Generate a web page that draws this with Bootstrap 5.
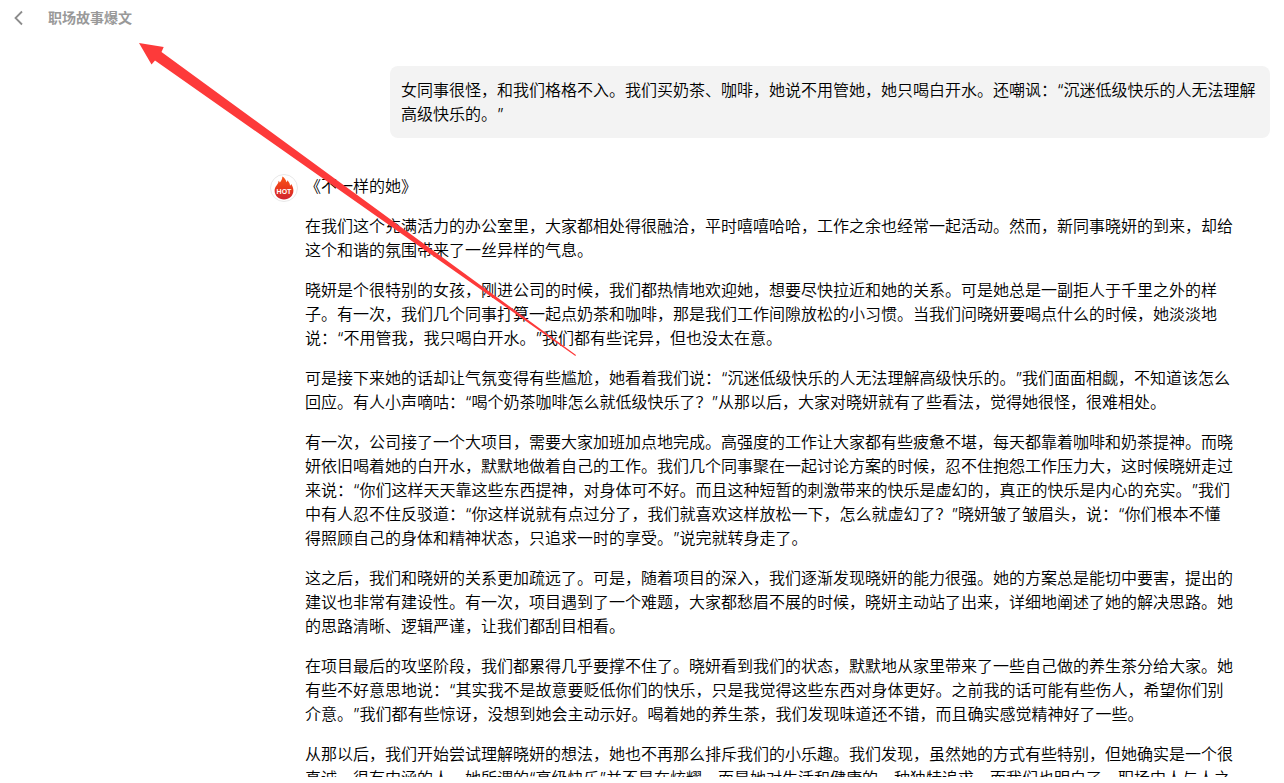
<!DOCTYPE html>
<html lang="zh-CN">
<head>
<meta charset="utf-8">
<meta name="viewport" content="width=device-width, initial-scale=1">
<title>职场故事爆文</title>
<link href="https://cdn.jsdelivr.net/npm/bootstrap@5.3.0/dist/css/bootstrap.min.css" rel="stylesheet">
<style>
  body { font-family: Inter, "Noto Sans CJK SC", sans-serif; font-size: 16px; line-height: 24px; font-weight: 350; color: #000; background: #fff; text-spacing-trim: space-all; }
  .page { height: 100vh; padding-bottom: 6px; }
  .topbar { height: 36px; padding-left: 12px; gap: 22px; }
  .back { width: 14px; height: 24px; color: #8c8c8c; }
  .title { font-size: 14px; line-height: 24px; font-weight: 700; color: #999; }
  .chat { padding: 30px 14px 0 270px; gap: 36px; }
  .bubble { margin-left: 120px; padding: 12px 12px 12px 11px; border-radius: 8px; background: #f3f3f3; }
  .reply { gap: 7px; padding-right: 34px; }
  .story p { margin-bottom: 16px; }
  .hot-label { font: 700 7px "Liberation Sans", sans-serif; fill: #fff; }
  .pointer { left: 0; top: 0; pointer-events: none; }
</style>
</head>
<body>
<div class="page overflow-hidden">
  <div class="h-100 overflow-hidden position-relative">
    <header class="topbar d-flex align-items-center">
      <button type="button" class="back btn p-0 border-0 d-flex align-items-center justify-content-center" aria-label="返回">
        <svg width="14" height="16" viewBox="0 0 14 16" fill="none" stroke="currentColor" stroke-width="1.8"><path d="M10 1.5 3.5 8l6.5 6.5"/></svg>
      </button>
      <h1 class="title m-0">职场故事爆文</h1>
    </header>
    <main class="chat d-flex flex-column">
      <div class="bubble">女同事很怪，和我们格格不入。我们买奶茶、咖啡，她说不用管她，她只喝白开水。还嘲讽：“沉迷低级快乐的人无法理解高级快乐的。”</div>
      <article class="reply d-flex align-items-start">
        <svg class="flex-shrink-0" width="28" height="28" viewBox="0 0 28 28" role="img" aria-label="HOT">
          <defs>
            <linearGradient id="flame" x1="0" y1="0" x2="0" y2="1">
              <stop offset="0" stop-color="#f8551a"/>
              <stop offset=".5" stop-color="#ea3a1c"/>
              <stop offset="1" stop-color="#cf2430"/>
            </linearGradient>
          </defs>
          <circle cx="14" cy="14" r="13.5" fill="#fff" stroke="#e8e8e8"/>
          <path d="M12.300 2.400c.2 2.600-1 4.200-2.500 6-.3-.8-.7-1.200-1.300-1.600.2 2-.8 3-2 4.600C5.200 13 4.600 14.600 4.600 16.600c0 5.200 4.200 9 9.400 9s9.400-3.800 9.400-9c0-2.700-1-4.700-2.200-6.600-.3.8-.6 1.300-1.200 1.700-.1-2.400-1.100-4-2.700-5.500-.1.900-.3 1.500-.8 2.100-.6-2.600-1.900-4.600-4.200-5.900z" fill="url(#flame)"/>
          <text class="hot-label" x="14" y="20" text-anchor="middle">HOT</text>
        </svg>
        <div class="story">
          <p>《不一样的她》</p>
          <p>在我们这个充满活力的办公室里，大家都相处得很融洽，平时嘻嘻哈哈，工作之余也经常一起活动。然而，新同事晓妍的到来，却给这个和谐的氛围带来了一丝异样的气息。</p>
          <p>晓妍是个很特别的女孩，刚进公司的时候，我们都热情地欢迎她，想要尽快拉近和她的关系。可是她总是一副拒人于千里之外的样子。有一次，我们几个同事打算一起点奶茶和咖啡，那是我们工作间隙放松的小习惯。当我们问晓妍要喝点什么的时候，她淡淡地说：“不用管我，我只喝白开水。”我们都有些诧异，但也没太在意。</p>
          <p>可是接下来她的话却让气氛变得有些尴尬，她看着我们说：“沉迷低级快乐的人无法理解高级快乐的。”我们面面相觑，不知道该怎么回应。有人小声嘀咕：“喝个奶茶咖啡怎么就低级快乐了？”从那以后，大家对晓妍就有了些看法，觉得她很怪，很难相处。</p>
          <p>有一次，公司接了一个大项目，需要大家加班加点地完成。高强度的工作让大家都有些疲惫不堪，每天都靠着咖啡和奶茶提神。而晓妍依旧喝着她的白开水，默默地做着自己的工作。我们几个同事聚在一起讨论方案的时候，忍不住抱怨工作压力大，这时候晓妍走过来说：“你们这样天天靠这些东西提神，对身体可不好。而且这种短暂的刺激带来的快乐是虚幻的，真正的快乐是内心的充实。”我们中有人忍不住反驳道：“你这样说就有点过分了，我们就喜欢这样放松一下，怎么就虚幻了？”晓妍皱了皱眉头，说：“你们根本不懂得照顾自己的身体和精神状态，只追求一时的享受。”说完就转身走了。</p>
          <p>这之后，我们和晓妍的关系更加疏远了。可是，随着项目的深入，我们逐渐发现晓妍的能力很强。她的方案总是能切中要害，提出的建议也非常有建设性。有一次，项目遇到了一个难题，大家都愁眉不展的时候，晓妍主动站了出来，详细地阐述了她的解决思路。她的思路清晰、逻辑严谨，让我们都刮目相看。</p>
          <p>在项目最后的攻坚阶段，我们都累得几乎要撑不住了。晓妍看到我们的状态，默默地从家里带来了一些自己做的养生茶分给大家。她有些不好意思地说：“其实我不是故意要贬低你们的快乐，只是我觉得这些东西对身体更好。之前我的话可能有些伤人，希望你们别介意。”我们都有些惊讶，没想到她会主动示好。喝着她的养生茶，我们发现味道还不错，而且确实感觉精神好了一些。</p>
          <p>从那以后，我们开始尝试理解晓妍的想法，她也不再那么排斥我们的小乐趣。我们发现，虽然她的方式有些特别，但她确实是一个很真诚、很有内涵的人。她所谓的“高级快乐”并不是在炫耀，而是她对生活和健康的一种独特追求。而我们也明白了，职场中人与人之</p>
        </div>
      </article>
    </main>
    <svg class="pointer position-absolute" width="600" height="370" viewBox="0 0 600 370" aria-hidden="true">
      <path d="M139 43 163.700 47 161.500 52 576 355 575.400 356 155 60.500 151.500 64.500z" fill="#fd3a3a"/>
    </svg>
  </div>
</div>
</body>
</html>
